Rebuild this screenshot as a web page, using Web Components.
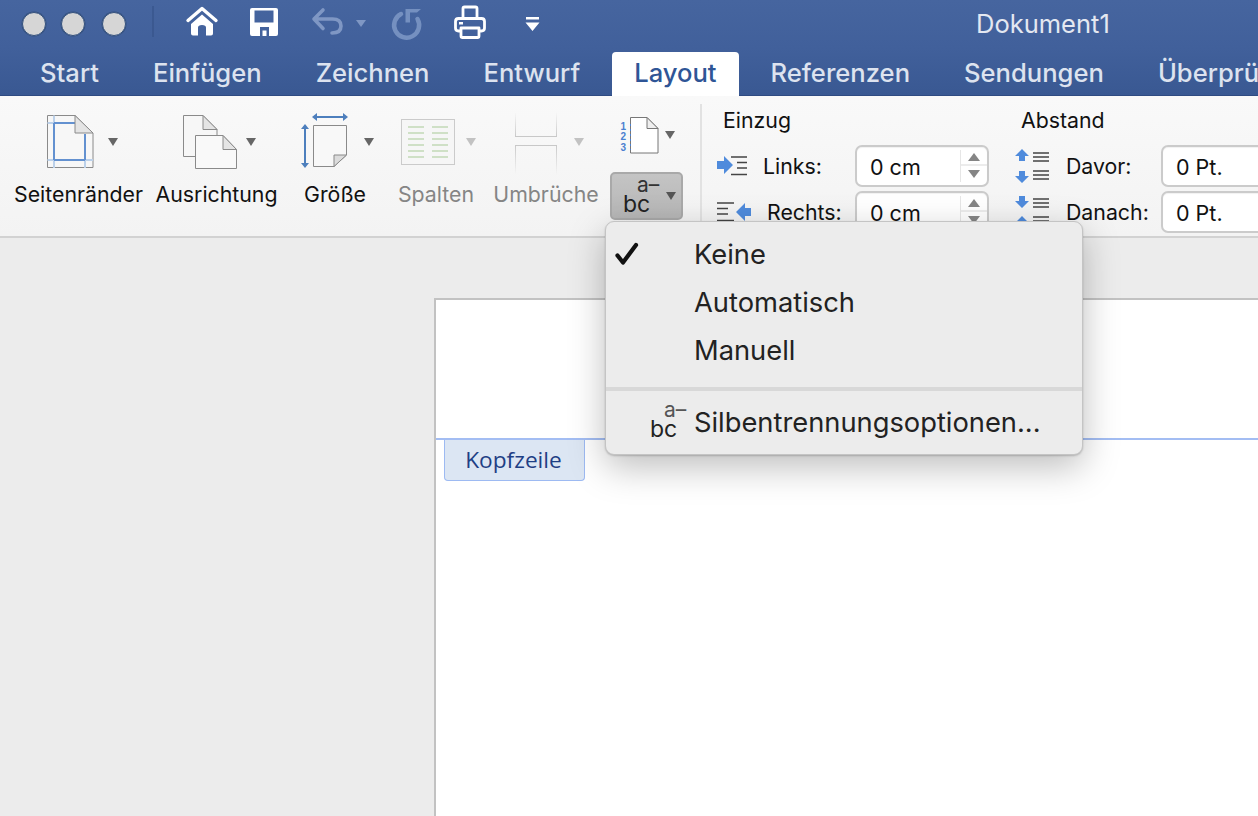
<!DOCTYPE html>
<html lang="de">
<head>
<meta charset="utf-8">
<title>Dokument1</title>
<style>
  html, body { margin: 0; height: 100%; overflow: hidden; }
  body { font-family: Inter, "Liberation Sans", sans-serif; background: #ececec; }
  word-app { width: 1258px; height: 816px; }
</style>
</head>
<body>
<word-app>
  <word-titlebar title-text="Dokument1"></word-titlebar>
  <word-tabs>
    <word-tab>Start</word-tab>
    <word-tab>Einfügen</word-tab>
    <word-tab>Zeichnen</word-tab>
    <word-tab>Entwurf</word-tab>
    <word-tab active>Layout</word-tab>
    <word-tab>Referenzen</word-tab>
    <word-tab>Sendungen</word-tab>
    <word-tab>Überprüfen</word-tab>
  </word-tabs>
  <word-ribbon></word-ribbon>
  <word-canvas></word-canvas>
  <word-menu></word-menu>
</word-app>

<script>
// kleines Dreieck neben den Ribbon-Buttons
const arrow = (x, y, fill = '#666') => `<path d="M${x} ${y}h10l-5 8z" fill="${fill}"/>`;

class WordApp extends HTMLElement {
    constructor() {
        super();
        this.attachShadow({ mode: 'open' });
    }

    connectedCallback() {
        this.shadowRoot.innerHTML = `
            <style>
                :host { display: flex; flex-direction: column; position: relative; overflow: hidden; }
            </style>
            <slot></slot>
        `;
    }
}

class WordTitlebar extends HTMLElement {
    constructor() {
        super();
        this.attachShadow({ mode: 'open' });
    }

    connectedCallback() {
        this.shadowRoot.innerHTML = `
            <style>
                :host {
                    display: flex;
                    align-items: center;
                    height: 48px;
                    flex: none;
                    background: linear-gradient(#46659f, #41609b);
                    position: relative;
                }
                .lights { display: flex; gap: 15.5px; padding-left: 21.5px; }
                .lights i {
                    width: 24px; height: 24px; border-radius: 50%;
                    background: #d6d6d6; border: 1.5px solid #34517f; box-sizing: border-box;
                    box-shadow: 0 0 0 .5px #34517f;
                }
                .lights i:nth-child(3) { margin-left: 1.5px; }
                svg { display: block; flex: none; margin-left: 24px; }
                .title {
                    margin-left: 426px;
                    font-size: 25.5px;
                    color: #e4e8f1;
                    padding-bottom: 1px;
                }
            </style>
            <div class="lights"><i></i><i></i><i></i></div>
            <svg width="400" height="48" viewBox="150 0 400 48">
                <path d="M153 6v31" stroke="#38568c" stroke-width="1.5"/>
                <path d="M188 20.5 202 8.5l14 12" fill="none" stroke="#fff" stroke-width="3.4" stroke-linecap="round" stroke-linejoin="round"/>
                <path fill="#fff" fill-rule="evenodd" d="M202 14.5l11 9.5v9.5q0 2-2 2h-5v-8q0-2.5-4-2.5t-4 2.5v8h-5q-2 0-2-2V24z"/>
                <path fill="#fff" fill-rule="evenodd" d="M252 8h24q2 0 2 2v24q0 2-2 2h-24q-2 0-2-2V10q0-2 2-2zm2.500 2.500v12h19v-12zM260 27v9h9v-9zm2.500 3.500h4v5.500h-4z"/>
                <path d="M323 10l-9 9 9 9.500M315 19h17.500q8.500 0 8.500 7t-9 7" fill="none" stroke="#7f97c4" stroke-width="3.600" stroke-linecap="round" stroke-linejoin="round"/>
                <path d="M356 20h10l-5 7z" fill="#7f97c4"/>
                <path d="M401 14a12.500 12.500 0 1 0 16.500 5" fill="none" stroke="#7590c0" stroke-width="4.500" stroke-linecap="round"/>
                <path d="M405.500 9H421l-4 3.500h-7v10h-4.500z" fill="#7590c0"/>
                <path d="M463 18V8.500q0-1.500 1.500-1.500h11q1.500 0 1.500 1.500V18M461 31h-2.500q-3 0-3-3v-6.500q0-3 3-3h23q3 0 3 3V28q0 3-3 3H479M461 28h18v8q0 1.500-1.500 1.500h-15q-1.500 0-1.500-1.500z" fill="none" stroke="#fff" stroke-width="2.800" stroke-linejoin="round"/>
                <path d="M459 22h4v2.500h-4z" fill="#fff"/>
                <path d="M526 17h13v2.500h-13zM525.500 22.500h14L532.500 31z" fill="#fff"/>
            </svg>
            <span class="title">${this.getAttribute('title-text')}</span>
        `;
    }
}

class WordTabs extends HTMLElement {
    constructor() {
        super();
        this.attachShadow({ mode: 'open' });
    }

    connectedCallback() {
        this.shadowRoot.innerHTML = `
            <style>
                :host {
                    display: flex;
                    height: 48px;
                    flex: none;
                    padding-left: 13px;
                    background: linear-gradient(#41609b, #395892);
                    box-shadow: inset 0 -1px #2f4b82;
                    overflow: hidden;
                    white-space: nowrap;
                    box-sizing: border-box;
                }
            </style>
            <slot></slot>
        `;
    }
}

class WordTab extends HTMLElement {
    constructor() {
        super();
        this.attachShadow({ mode: 'open' });
    }

    connectedCallback() {
        this.shadowRoot.innerHTML = `
            <style>
                :host {
                    display: block;
                    flex: none;
                    margin: 4px 4.5px 0;
                    height: 44px;
                    line-height: 42px;
                    padding: 0 22.5px;
                    font-size: 25.6px;
                    font-weight: 500;
                    color: #dde3ef;
                    border-radius: 4px 4px 0 0;
                }
                :host([active]) { background: #fff; color: #2f5596; }
            </style>
            <slot></slot>
        `;
    }
}

class RibbonButton extends HTMLElement {
    constructor() {
        super();
        this.attachShadow({ mode: 'open' });
    }

    connectedCallback() {
        this.shadowRoot.innerHTML = `
            <style>
                :host {
                    display: flex;
                    flex-direction: column;
                    align-items: center;
                    flex: none;
                    font-size: 21.3px;
                    color: #111;
                    white-space: nowrap;
                }
                :host([disabled]) { color: #858585; }
                .icon { height: 68px; }
                .label { margin-top: 6px; line-height: 24px; }
            </style>
            <div class="icon"><slot name="icon"></slot></div>
            <div class="label"><slot></slot></div>
        `;
    }
}

class HyphenGlyph extends HTMLElement {
    constructor() {
        super();
        this.attachShadow({ mode: 'open' });
    }

    connectedCallback() {
        this.shadowRoot.innerHTML = `
            <style>
                :host {
                    display: block;
                    width: 38px;
                    line-height: 1;
                    color: #222;
                    font-size: 23px;
                    white-space: nowrap;
                }
                span { display: block; }
                .a { font-size: 21px; height: 16px; line-height: 16px; margin-left: 14px; color: var(--a-color, #333); }
                .b { height: 22px; line-height: 22px; }
            </style>
            <span class="a">a–</span>
            <span class="b">bc</span>
        `;
    }
}

class SpinField extends HTMLElement {
    constructor() {
        super();
        this.attachShadow({ mode: 'open' });
    }

    connectedCallback() {
        this.shadowRoot.innerHTML = `
            <style>
                :host {
                    display: flex;
                    align-items: center;
                    height: 42px;
                    font-size: 21.3px;
                    color: #111;
                    white-space: nowrap;
                }
                .icon { width: var(--icon, 46px); flex: none; height: 36px; }
                .lab { width: var(--lab, 92px); flex: none; }
                .box {
                    position: relative;
                    width: 134px; height: 42px; flex: none;
                    box-sizing: border-box;
                    background: #fff;
                    border: 2px solid #cbcbcb;
                    border-radius: 7px;
                    line-height: 40px;
                    padding-left: 13px;
                    font-size: 21.5px;
                    box-shadow: inset 0 1px 1px rgba(0,0,0,.06);
                }
                .spin {
                    position: absolute; top: 3px; bottom: 3px; right: 0; width: 26px;
                    border-left: 1px solid #e6e6e6;
                    display: grid; grid-template-rows: 1fr 1fr;
                }
                .spin svg { display: block; margin: auto; }
                .spin div { display: flex; }
                .spin div:first-child { border-bottom: 2px solid #ececec; }
            </style>
            <div class="icon"><slot name="icon"></slot></div>
            <span class="lab">${this.getAttribute('label')}</span>
            <div class="box">${this.getAttribute('value')}
                <div class="spin">
                    <div><svg width="12" height="8"><path d="M6 0l6 8H0z" fill="#858585"/></svg></div>
                    <div><svg width="12" height="8"><path d="M6 8l6-8H0z" fill="#858585"/></svg></div>
                </div>
            </div>
        `;
    }
}

class WordRibbon extends HTMLElement {
    constructor() {
        super();
        this.attachShadow({ mode: 'open' });
    }

    connectedCallback() {
        const page = '#8a8a8a';
        const blue = '#6391d0';
        const pale = '#bcd1ea';
        this.shadowRoot.innerHTML = `
            <style>
                :host {
                    display: flex;
                    flex: none;
                    height: 142px;
                    box-sizing: border-box;
                    padding: 12px 0 0 14px;
                    background: linear-gradient(#f9f9f9, #f3f3f3);
                    border-bottom: 2px solid #d2d2d2;
                    overflow: hidden;
                    font-family: Inter, "Liberation Sans", sans-serif;
                }
                svg { display: block; }
                ribbon-button + ribbon-button { margin-left: 13px; }
                .numbers { width: 73px; margin-left: 12px; flex: none; }
                .hyphen {
                    display: flex;
                    align-items: center;
                    box-sizing: border-box;
                    height: 48px;
                    margin-top: 4px;
                    border: 2px solid #a9a9a9;
                    border-radius: 5px;
                    background: linear-gradient(#c4c4c4, #b6b6b6);
                    padding-left: 11px;
                }
                .hyphen svg { margin-left: 4px; }
                .sep { width: 2px; height: 126px; background: #e2e2e2; margin: -4px 0 0 17px; flex: none; }
                .para {
                    margin-left: 15px;
                    display: grid;
                    grid-template-columns: 298px 244px;
                    grid-template-rows: 33px 42px 42px;
                    row-gap: 4px;
                    align-content: start;
                    font-size: 21.3px;
                    color: #111;
                    white-space: nowrap;
                    flex: none;
                }
                .para > span { line-height: 24px; padding-left: 6px; }
                spin-field svg { display: block; }
            </style>

            <ribbon-button style="width:129px">
                <svg slot="icon" width="129" height="68" viewBox="14 108 129 68">
                    <path d="M47.500 115.500H75L93 133v34.500H47.500z" fill="#f7f7f7" stroke="${page}"/>
                    <path d="M54 115.500V168M85 134V168M47.500 160H93M47.500 123H76" stroke="${pale}" stroke-width="2"/>
                    <path d="M54 123V160M54 123H76M85 134V160M54 160H85" stroke="${blue}" stroke-width="2" fill="none"/>
                    <path d="M75 115.500V133h18z" fill="#e4e4e4" stroke="${page}"/>
                    ${arrow(108, 138)}
                </svg>
                Seitenränder
            </ribbon-button>
            <ribbon-button style="width:121px">
                <svg slot="icon" width="121" height="68" viewBox="156 108 121 68">
                    <path d="M183.500 115.500H203l14 14v27h-33.500z" fill="#f7f7f7" stroke="${page}"/>
                    <path d="M203 115.500V129.500h14z" fill="#e4e4e4" stroke="${page}"/>
                    <path d="M195.500 135.500H223l13.500 14v19h-41z" fill="#f9f9f9" stroke="${page}"/>
                    <path d="M223 135.500V149.500h13.500z" fill="#e4e4e4" stroke="${page}"/>
                    ${arrow(246, 138)}
                </svg>
                Ausrichtung
            </ribbon-button>
            <ribbon-button style="width:86px;margin-left:15px">
                <svg slot="icon" width="86" height="68" viewBox="292 108 86 68">
                    <path d="M313.500 125.500H346.500V155L334 166.500h-20.500z" fill="#f8f8f8" stroke="${page}"/>
                    <path d="M346.500 155H334v11.500z" fill="#dcdcdc" stroke="${page}"/>
                    <path d="M316 117h28" stroke="#4d7fbd" stroke-width="2"/>
                    <path d="M312 117l5-4v8zM348 117l-5-4v8z" fill="#4d7fbd"/>
                    <path d="M305 128v36" stroke="#4d7fbd" stroke-width="2"/>
                    <path d="M305 124l-4 5h8zM305 168l-4-5h8z" fill="#4d7fbd"/>
                    ${arrow(364, 138)}
                </svg>
                Größe
            </ribbon-button>
            <ribbon-button disabled style="width:88px;margin-left:14px">
                <svg slot="icon" width="88" height="68" viewBox="392 108 88 68">
                    <rect x="401.500" y="119.500" width="53" height="45" fill="#f6f6f6" stroke="#cbcbcb"/>
                    <path d="M408 127h16M432 127h16M408 133h16M432 133h16M408 139h16M432 139h16M408 145h16M432 145h16M408 151h16M432 151h16M408 157h16M432 157h16" stroke="#cfe0c6" stroke-width="2"/>
                    ${arrow(466, 138, '#c2c2c2')}
                </svg>
                Spalten
            </ribbon-button>
            <ribbon-button disabled style="width:104px;margin-left:14px">
                <svg slot="icon" width="104" height="68" viewBox="494 108 104 68">
                    <defs>
                        <linearGradient id="fu" x1="0" y1="1" x2="0" y2="0"><stop offset="0" stop-color="#c8c8c8"/><stop offset="1" stop-color="#c8c8c8" stop-opacity="0"/></linearGradient>
                        <linearGradient id="fd" x1="0" y1="0" x2="0" y2="1"><stop offset="0" stop-color="#c8c8c8"/><stop offset="1" stop-color="#c8c8c8" stop-opacity="0"/></linearGradient>
                    </defs>
                    <path d="M515 112h1v25h-1zM556 112h1v25h-1z" fill="url(#fu)"/>
                    <path d="M515 145h1v30h-1zM556 145h1v30h-1z" fill="url(#fd)"/>
                    <path d="M515 136.500h42M515 145.500h42" stroke="#c8c8c8"/>
                    ${arrow(574, 138, '#c2c2c2')}
                </svg>
                Umbrüche
            </ribbon-button>

            <div class="numbers">
                <svg width="73" height="60" viewBox="610 108 73 60">
                    <path d="M630.500 117.500H647l11 11v24.500h-27.500z" fill="#fff" stroke="#777"/>
                    <path d="M647 117.500v11h11z" fill="#efefef" stroke="#777"/>
                    <path d="M630.500 124v26" stroke="#4a7fd0" stroke-dasharray="2 3"/>
                    <g font-family="'Liberation Sans', sans-serif" font-size="10" font-weight="700" fill="#4a7fd0">
                        <text x="620.500" y="129.500">1</text>
                        <text x="620.500" y="140">2</text>
                        <text x="620.500" y="150.500">3</text>
                    </g>
                    ${arrow(665, 131)}
                </svg>
                <div class="hyphen">
                    <hyphen-glyph></hyphen-glyph>
                    <svg width="12" height="8"><path d="M1 0h10l-5 8z" fill="#555"/></svg>
                </div>
            </div>

            <div class="sep"></div>

            <div class="para">
                <span>Einzug</span>
                <span>Abstand</span>
                <spin-field label="Links:" value="0 cm" style="--icon:46px;--lab:92px">
                    <svg slot="icon" width="32" height="36" viewBox="717 148 32 36">
                        <path d="M717 161h7v-5l9 9-9 9v-5h-7z" fill="#4f8bdc"/>
                        <path d="M731 157h16M737 162.500h10M737 168h10M731 174.500h16" stroke="#444" stroke-width="1.500"/>
                    </svg>
                </spin-field>
                <spin-field label="Davor:" value="0 Pt." style="--icon:51px;--lab:95px">
                    <svg slot="icon" width="36" height="36" viewBox="1015 148 36 36">
                        <path d="M1015 156l7-7 7 7h-4v5h-6v-5zM1015 176l7 7 7-7h-4v-5h-6v5z" fill="#4f8bdc"/>
                        <path d="M1033 153h16M1033 157h16M1033 161h16M1033 171h16M1033 175h16M1033 179h16" stroke="#444" stroke-width="1.500"/>
                    </svg>
                </spin-field>
                <spin-field label="Rechts:" value="0 cm" style="--icon:50px;--lab:88px">
                    <svg slot="icon" width="36" height="36" viewBox="717 194 36 36">
                        <path d="M717 203h17M717 208.500h11M717 214h11M717 220.500h17" stroke="#444" stroke-width="1.500"/>
                        <path d="M751 208h-6v-5l-9 9 9 9v-5h6z" fill="#4f8bdc"/>
                    </svg>
                </spin-field>
                <spin-field label="Danach:" value="0 Pt." style="--icon:51px;--lab:95px">
                    <svg slot="icon" width="36" height="36" viewBox="1015 194 36 36">
                        <path d="M1015 201l7 7 7-7h-4v-5h-6v5zM1015 223l7-7 7 7h-4v5h-6v-5z" fill="#4f8bdc"/>
                        <path d="M1033 199h16M1033 203h16M1033 207h16M1033 217h16M1033 221h16M1033 225h16" stroke="#444" stroke-width="1.500"/>
                    </svg>
                </spin-field>
            </div>
        `;
    }
}

class WordCanvas extends HTMLElement {
    constructor() {
        super();
        this.attachShadow({ mode: 'open' });
    }

    connectedCallback() {
        this.shadowRoot.innerHTML = `
            <style>
                :host {
                    display: block;
                    flex: 1;
                    padding: 60px 0 0 434px;
                    background: #ececec;
                    min-height: 0;
                }
                .page {
                    height: 600px;
                    box-sizing: border-box;
                    background: #fff;
                    border-left: 2px solid #c2c2c2;
                    border-top: 2px solid #c2c2c2;
                    padding-top: 138px;
                }
                .rule { height: 2px; background: #a3bdf3; }
                .tag {
                    margin-left: 8px;
                    box-sizing: border-box;
                    width: 141px; height: 41px;
                    padding-right: 2px;
                    background: #dce6f3;
                    border: 1px solid #9dbaf2;
                    border-top: 0;
                    border-radius: 0 0 4px 4px;
                    color: #1f3f85;
                    font: 500 22.7px/40px "Open Sans", "Liberation Sans", sans-serif;
                    text-align: center;
                }
            </style>
            <div class="page">
                <div class="rule"></div>
                <div class="tag">Kopfzeile</div>
            </div>
        `;
    }
}

class WordMenu extends HTMLElement {
    constructor() {
        super();
        this.attachShadow({ mode: 'open' });
    }

    connectedCallback() {
        this.shadowRoot.innerHTML = `
            <style>
                :host {
                    display: block;
                    position: absolute;
                    left: 605px;
                    top: 221px;
                    width: 478px;
                    height: 234px;
                    box-sizing: border-box;
                    background: #ececec;
                    border: 1px solid #c4c4c4;
                    border-radius: 9px;
                    box-shadow: 0 12px 36px rgba(0,0,0,.26), 0 1px 2px rgba(0,0,0,.2);
                    padding-top: 8px;
                    font-size: 27.3px;
                    color: #222;
                    white-space: nowrap;
                }
                .item {
                    display: flex;
                    align-items: center;
                    height: 48px;
                }
                .mark { width: 88px; flex: none; display: flex; position: relative; height: 48px; align-items: center; }
                .mark svg { margin-left: 9px; }
                .mark hyphen-glyph { position: absolute; left: 44px; top: 4px; }
                .rule { height: 4px; background: #d8d8d8; margin: 13px 0 7px; }
            </style>
            <div class="item">
                <div class="mark"><svg width="24" height="24" viewBox="0 0 24 24"><path d="M2.500 13.500 8 20.500 21 3" fill="none" stroke="#111" stroke-width="4.200" stroke-linejoin="round" stroke-linecap="round"/></svg></div>
                Keine
            </div>
            <div class="item"><div class="mark"></div>Automatisch</div>
            <div class="item"><div class="mark"></div>Manuell</div>
            <div class="rule"></div>
            <div class="item"><div class="mark"><hyphen-glyph style="--a-color:#555"></hyphen-glyph></div>Silbentrennungsoptionen...</div>
        `;
    }
}

customElements.define('word-app', WordApp);
customElements.define('word-titlebar', WordTitlebar);
customElements.define('word-tabs', WordTabs);
customElements.define('word-tab', WordTab);
customElements.define('ribbon-button', RibbonButton);
customElements.define('hyphen-glyph', HyphenGlyph);
customElements.define('spin-field', SpinField);
customElements.define('word-ribbon', WordRibbon);
customElements.define('word-canvas', WordCanvas);
customElements.define('word-menu', WordMenu);
</script>
</body>
</html>
